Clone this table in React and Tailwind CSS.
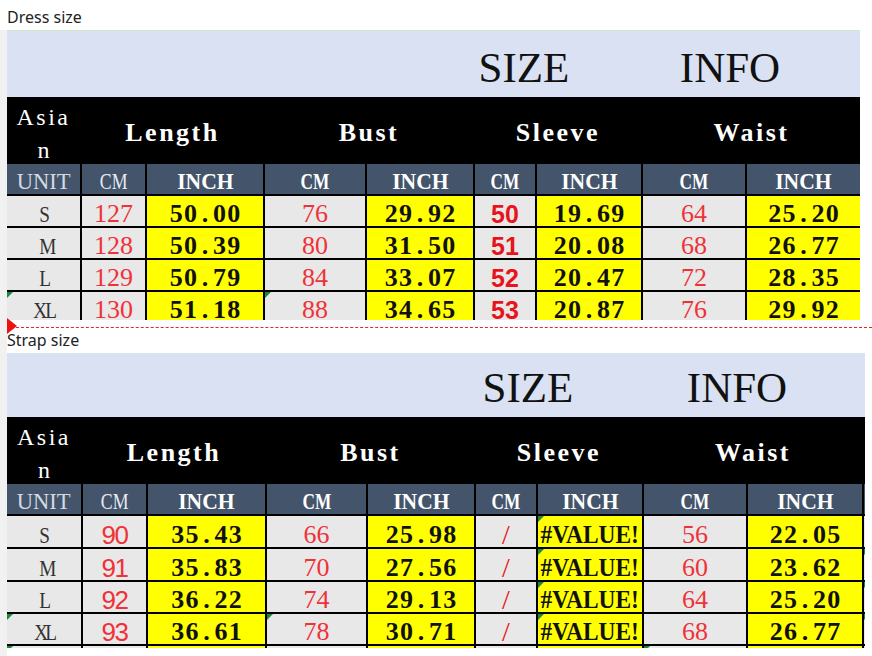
import clsx from "clsx";

const serif = "font-['Liberation_Serif','Times_New_Roman',serif]";
const sans = "font-['Liberation_Sans',Arial,sans-serif]";

// one glyph per fixed cell, like the SimSun half-width text in the sheet
function Mono({ text, cell, glyph }) {
  return (
    <span className="inline-flex whitespace-nowrap">
      {text.split("").map((c, i) => (
        <span key={i} className={clsx("inline-block text-center", cell, glyph)}>
          {c === " " ? "\u00a0" : c}
        </span>
      ))}
    </span>
  );
}

function Mark() {
  return (
    <span className="absolute left-0 top-0 h-0 w-0 border-r-[6px] border-t-[6px] border-r-transparent border-t-[#188a3a]" />
  );
}

function Cell({ tone, mark, className, children }) {
  return (
    <div
      className={clsx(
        "relative flex items-center justify-center overflow-visible pt-[6px] leading-none",
        tone === "y" ? "bg-[#ffff00]" : "bg-[#e8e8e8]",
        className
      )}
    >
      {mark && <Mark />}
      {children}
    </div>
  );
}

const SizeCell = ({ v, mark }) => (
  <Cell mark={mark}>
    <span className={clsx(serif, "text-[24px] text-[#333]")}>
      <Mono text={v} cell="w-[11.5px]" glyph="scale-x-[0.8]" />
    </span>
  </Cell>
);

const RedCm = ({ v, mark, font }) => (
  <Cell mark={mark}>
    <span className={clsx(font || serif, "text-[26px] text-[#ef3238]")}>
      <Mono text={v} cell="w-[13px]" />
    </span>
  </Cell>
);

const Inch = ({ v, mark }) => (
  <Cell tone="y" mark={mark}>
    {v.startsWith("#") ? (
      <span className={clsx(serif, "inline-block scale-x-[0.9] whitespace-nowrap text-[26px] font-bold text-[#111]")}>
        {v}
      </span>
    ) : (
      <span className={clsx(serif, "text-[26px] font-bold text-[#111]")}>
        <Mono text={v} cell="w-[14.4px]" />
      </span>
    )}
  </Cell>
);

const SleeveCm = ({ v }) =>
  v === "/" ? (
    <Cell>
      <span className={clsx(serif, "text-[28px] text-[#e8141c]")}>/</span>
    </Cell>
  ) : (
    <Cell>
      <span className={clsx(sans, "text-[25px] font-bold text-[#e8141c]")}>{v}</span>
    </Cell>
  );

const Head = ({ text, className }) => (
  <div className={clsx("flex items-center justify-center bg-black pt-[7px]", className)}>
    <span className={clsx(serif, "text-[26px] font-bold leading-none tracking-[2.5px] text-white")}>{text}</span>
  </div>
);

const Unit = ({ text, bold, dim, squeeze }) => (
  <div className="flex items-center justify-center bg-[#44546a] pt-[4px]">
    <span
      className={clsx(
        serif,
        "inline-block whitespace-nowrap text-[24px] leading-none",
        squeeze,
        bold ? "font-bold text-white" : dim ? "text-[#d3dae4]" : "text-[#e6ebf2]"
      )}
    >
      {text}
    </span>
  </div>
);

function SizeChart({ cfg, rows }) {
  return (
    <div className={clsx("overflow-hidden", cfg.wrap)}>
      <div className={clsx("flex items-end bg-[#d9e1f2] pb-[8px]", cfg.band)}>
        <div className={clsx(serif, "flex w-[86px] justify-center whitespace-nowrap text-[43px] leading-none text-[#111]")}>
          SIZE
        </div>
        <div className={clsx(serif, "flex w-[98px] justify-center whitespace-nowrap text-[43px] leading-none text-[#111]", cfg.infoBox)}>
          INFO
        </div>
      </div>
      <div className={clsx("grid gap-[2px] bg-black", cfg.grid)}>
        <div className="flex flex-col items-center justify-center bg-black pt-[8px]">
          <span className={clsx(serif, "text-[24px] leading-[33px] tracking-[2.5px] text-white")}>Asia</span>
          <span className={clsx(serif, "text-[24px] leading-[33px] text-white")}>n</span>
        </div>
        <Head text="Length" className="col-span-2" />
        <Head text="Bust" className="col-span-2" />
        <Head text="Sleeve" className="col-span-2" />
        <Head text="Waist" className="col-span-2" />
        {cfg.tail && <div className="bg-black" />}

        <Unit text="UNIT" dim squeeze="scale-x-[0.94]" />
        <Unit text="CM" squeeze="scale-x-[0.74]" />
        <Unit text="INCH" bold squeeze="scale-x-[0.9]" />
        <Unit text="CM" bold squeeze="scale-x-[0.72]" />
        <Unit text="INCH" bold squeeze="scale-x-[0.9]" />
        <Unit text="CM" bold squeeze="scale-x-[0.72]" />
        <Unit text="INCH" bold squeeze="scale-x-[0.9]" />
        <Unit text="CM" bold squeeze="scale-x-[0.72]" />
        <Unit text="INCH" bold squeeze="scale-x-[0.9]" />
        {cfg.tail && <div className="bg-[#44546a]" />}

        {rows.map((r, i) => (
          <div key={i} className="contents">
            <SizeCell v={r.size} mark={r.marks?.includes(1)} />
            <RedCm v={r.len} mark={r.marks?.includes(2)} font={cfg.lenFont} />
            <Inch v={r.lenIn} />
            <RedCm v={r.bust} mark={r.marks?.includes(4)} />
            <Inch v={r.bustIn} />
            <SleeveCm v={r.sleeve} />
            <Inch v={r.sleeveIn} mark={r.marks?.includes(7)} />
            <RedCm v={r.waist} mark={r.marks?.includes(8)} />
            <Inch v={r.waistIn} />
            {cfg.tail && <Cell mark={r.marks?.includes(10)} />}
          </div>
        ))}
      </div>
    </div>
  );
}

const dress = {
  wrap: "h-[290px] w-[853px]",
  band: "h-[67px] border-t border-[#cfe5c6] pl-[474px]",
  infoBox: "ml-[114px]",
  grid: "grid-cols-[73px_63px_116px_100px_106px_60px_104px_102px_113px] grid-rows-[65px_30px_30px_30px_30px_30px]",
};

const strap = {
  wrap: "h-[295px] w-[858px]",
  band: "h-[64px] pl-[478px]",
  infoBox: "ml-[117px]",
  grid: "grid-cols-[74px_63px_117px_99px_106px_60px_104px_102px_114px_1fr] grid-rows-[65px_30px_31px_31px_30px_30px_30px]",
  tail: true,
  lenFont: sans,
};

const dressRows = [
  { size: "S", len: "127", lenIn: "50.00", bust: "76", bustIn: "29.92", sleeve: "50", sleeveIn: "19.69", waist: "64", waistIn: "25.20" },
  { size: "M", len: "128", lenIn: "50.39", bust: "80", bustIn: "31.50", sleeve: "51", sleeveIn: "20.08", waist: "68", waistIn: "26.77" },
  { size: "L", len: "129", lenIn: "50.79", bust: "84", bustIn: "33.07", sleeve: "52", sleeveIn: "20.47", waist: "72", waistIn: "28.35" },
  { size: "XL", len: "130", lenIn: "51.18", bust: "88", bustIn: "34.65", sleeve: "53", sleeveIn: "20.87", waist: "76", waistIn: "29.92", marks: [1, 4] },
  { size: "2XL", len: "131", lenIn: "51.57", bust: "92", bustIn: "36.22", sleeve: "54", sleeveIn: "21.26", waist: "80", waistIn: "31.50" },
];

const strapRows = [
  { size: "S", len: "90", lenIn: "35.43", bust: "66", bustIn: "25.98", sleeve: "/", sleeveIn: "#VALUE!", waist: "56", waistIn: "22.05", marks: [7] },
  { size: "M", len: "91", lenIn: "35.83", bust: "70", bustIn: "27.56", sleeve: "/", sleeveIn: "#VALUE!", waist: "60", waistIn: "23.62", marks: [7, 10] },
  { size: "L", len: "92", lenIn: "36.22", bust: "74", bustIn: "29.13", sleeve: "/", sleeveIn: "#VALUE!", waist: "64", waistIn: "25.20", marks: [7, 10] },
  { size: "XL", len: "93", lenIn: "36.61", bust: "78", bustIn: "30.71", sleeve: "/", sleeveIn: "#VALUE!", waist: "68", waistIn: "26.77", marks: [1, 4, 7, 10] },
  { size: "2XL", len: "94", lenIn: "37.01", bust: "82", bustIn: "32.28", sleeve: "/", sleeveIn: "#VALUE!", waist: "72", waistIn: "28.35", marks: [1, 8] },
];

export default function App() {
  return (
    <div className="flex h-[656px] w-[872px] overflow-hidden bg-white">
      <div className="mt-[30px] w-[7px] shrink-0 bg-[#f1f1f1]" />
      <div className="flex min-w-0 flex-1 flex-col">
        <div className="h-[30px] pt-[7px] font-['Noto_Sans',sans-serif] text-[16px] leading-[20px] text-[#222]">
          Dress size
        </div>
        <SizeChart cfg={dress} rows={dressRows} />
        <div className="relative h-[33px] pt-[10px] font-['Noto_Sans',sans-serif] text-[16px] leading-[20px] text-[#222]">
          <div className="absolute left-[9px] right-0 top-[7px] border-t border-dashed border-[#d92b2b]" />
          <div className="absolute left-0 top-[-2px] h-0 w-0 border-y-[8px] border-l-[10px] border-y-transparent border-l-[#ee1111]" />
          Strap size
        </div>
        <SizeChart cfg={strap} rows={strapRows} />
      </div>
    </div>
  );
}
